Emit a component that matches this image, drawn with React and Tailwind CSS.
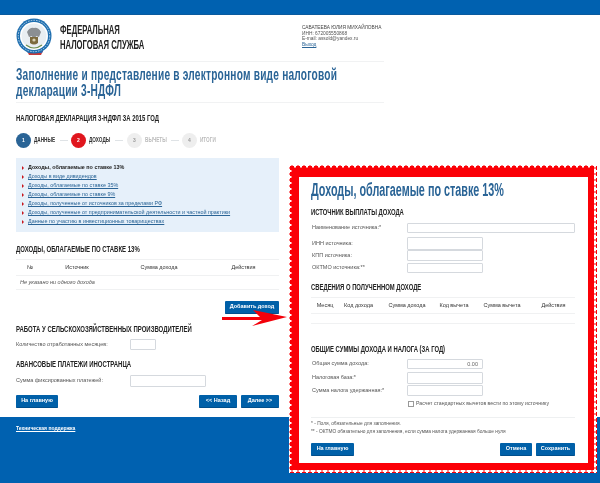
const narrow = "font-['Liberation_Sans',sans-serif] font-bold whitespace-nowrap origin-left";
const btn = "flex items-center justify-center bg-[#0060a8] text-white font-bold text-[5.5px] leading-none rounded-[1px] border-b border-[#004f8c]";
const input = "border border-[#d5d9de] rounded-[1px] bg-white shrink-0";

function Logo() {
  return (
    <svg width="38" height="38" viewBox="0 0 38 38" className="shrink-0 mt-[3px]">
      <path d="M11 33 h16 l-2 4 h-12 z" fill="#c43a3a" />
      <path d="M11 33 h16 l-1 2 h-14 z" fill="#3a5fa8" />
      <circle cx="18" cy="18" r="17.5" fill="#1f6fb0" />
      <circle cx="18" cy="18" r="14" fill="#ffffff" />
      <circle cx="18" cy="18" r="15.7" fill="none" stroke="#bcd6ea" strokeWidth="1" strokeDasharray="1.5 1.2" />
      <circle cx="18" cy="18" r="12.5" fill="#e9eef2" />
      <path d="M11 14 q3 -5 7 -4 q4 -1 7 4 l-2 5 l-3 -1 l-1 6 h-2 l-1 -6 l-3 1 z" fill="#8b8f93" />
      <path d="M14 19 h8 v6 q-4 3 -8 0 z" fill="#7c6a3e" />
      <circle cx="18" cy="22" r="1.6" fill="#d9d2b6" />
      <path d="M10 27 q8 6 16 0" fill="none" stroke="#6f8e4e" strokeWidth="1.2" />
    </svg>
  );
}

function Step({ n, label, color, text, arrow, gap }) {
  return (
    <>
      <div className={`w-[15px] h-[15px] rounded-full flex items-center justify-center text-[5px] font-bold shrink-0 ${color}`}>{n}</div>
      <span className={`${narrow} block ml-[3px] w-[26px] scale-x-[0.72] text-[6.5px] leading-none ${text}`}>{label}</span>
      {arrow && <span className={`w-[8px] h-[1px] bg-[#dfe3e6] shrink-0 ${gap}`} />}
    </>
  );
}

function Scallop({ children }) {
  return (
    <div className="absolute left-[289px] top-[165px] p-[3px] bg-white bg-[radial-gradient(circle,#fb0007_2.3px,transparent_2.8px)] bg-[length:6px_6px]">
      <div className="bg-[#fb0007]">
        {children}
      </div>
    </div>
  );
}

const links = [
  "Доходы в виде дивидендов",
  "Доходы, облагаемые по ставке 35%",
  "Доходы, облагаемые по ставке 9%",
  "Доходы, полученные от источников за пределами РФ",
  "Доходы, полученные от предпринимательской деятельности и частной практики",
  "Данные по участию в инвестиционных товариществах",
];

function Modal() {
  const Row = ({ label, w, h, mb, grey, value }) => (
    <div className={`flex items-center ${mb}`}>
      <span className="w-[96px] pl-[1px] text-[5.5px] text-[#555] leading-none shrink-0">{label}</span>
      <div className={`${input} ${w} ${h} ${grey ? "bg-[#e9e9e9]" : ""} flex items-center justify-end pr-[4px] text-[5.5px] text-[#666]`}>{value}</div>
    </div>
  );
  const head = `${narrow} text-[#222] text-[9.5px] leading-[12px] scale-x-[0.62]`;
  return (
    <Scallop>
      <div className="ml-[7px] mr-[6px] pt-[9px] pb-[7px]">
        <div className="w-[289px] h-[286px] bg-white px-[12px] text-[#333] flex flex-col">
          <div className={`${narrow} mt-[3px] text-[#2a6496] text-[18px] leading-[20px] scale-x-[0.6]`}>Доходы, облагаемые по ставке 13%</div>
          <div className={`${head} mt-[6px]`}>ИСТОЧНИК ВЫПЛАТЫ ДОХОДА</div>
          <div className="mt-[5px] flex flex-col">
            <Row label="Наименование источника:*" w="w-[168px]" h="h-[10px]" mb="mb-[4px]" />
            <Row label="ИНН источника:" w="w-[76px]" h="h-[13px]" />
            <Row label="КПП источника:" w="w-[76px]" h="h-[11px]" mb="mb-[2px]" />
            <Row label="ОКТМО источника:**" w="w-[76px]" h="h-[10px]" />
          </div>
          <div className={`${head} mt-[8px]`}>СВЕДЕНИЯ О ПОЛУЧЕННОМ ДОХОДЕ</div>
          <div className="mt-[4px] w-[264px] border-y border-[#f0f1f2]">
            <div className="grid grid-cols-[28px_39px_58px_36px_60px_43px] h-[16px] items-center text-center text-[5.5px] text-[#333] border-b border-[#f0f1f2] whitespace-nowrap">
              <span>Месяц</span><span>Код дохода</span><span>Сумма дохода</span><span>Код вычета</span><span>Сумма вычета</span><span>Действия</span>
            </div>
            <div className="h-[9px]" />
          </div>
          <div className={`${head} mt-[19px]`}>ОБЩИЕ СУММЫ ДОХОДА И НАЛОГА (ЗА ГОД)</div>
          <div className="mt-[4px] flex flex-col">
            <Row label="Общая сумма дохода:" w="w-[76px]" h="h-[10px]" mb="mb-[3px]" grey value="0.00" />
            <Row label="Налоговая база:*" w="w-[76px]" h="h-[12px]" mb="mb-[1px]" />
            <Row label="Сумма налога удержанная:*" w="w-[76px]" h="h-[11px]" />
          </div>
          <div className="mt-[5px] ml-[97px] flex items-center gap-[2px]">
            <div className="w-[6px] h-[6px] border border-[#999] bg-white" />
            <span className="text-[5.2px] leading-none text-[#555] whitespace-nowrap">Расчет стандартных вычетов вести по этому источнику</span>
          </div>
          <div className="mt-[10px] w-[264px] border-t border-[#eef0f1] pt-[2px] text-[4.8px] leading-[8px] text-[#555] whitespace-nowrap">
            <div>* - Поля, обязательные для заполнения.</div>
            <div>** - ОКТМО обязательно для заполнения, если сумма налога удержанная больше нуля</div>
          </div>
          <div className="mt-[7px] w-[264px] flex">
            <div className={`${btn} w-[43px] h-[13px]`}>На главную</div>
            <div className="flex-1" />
            <div className={`${btn} w-[32px] h-[13px]`}>Отмена</div>
            <div className={`${btn} w-[39px] h-[13px] ml-[4px]`}>Сохранить</div>
          </div>
        </div>
      </div>
    </Scallop>
  );
}

export default function App() {
  const head = `${narrow} text-[#222] text-[9.5px] leading-[12px] scale-x-[0.63]`;
  return (
    <div className="relative w-[600px] h-[483px] overflow-hidden bg-white font-['Liberation_Sans',sans-serif] flex flex-col blur-[0.3px]">
      <div className="h-[15px] bg-[#0061b0] border-b border-[#0a5a9e] shrink-0" />
      <div className="ml-[16px] w-[368px] h-[47px] border-b border-[#f1f2f3] flex items-start shrink-0">
        <Logo />
        <div className={`${narrow} ml-[6px] mt-[8px] text-[#222] text-[12px] leading-[15px] w-[242px] scale-x-[0.64]`}>
          <div>ФЕДЕРАЛЬНАЯ</div>
          <div>НАЛОГОВАЯ СЛУЖБА</div>
        </div>
        <div className="mt-[10px] text-[4.8px] leading-[5.5px] text-[#555] whitespace-nowrap">
          <div className="text-[#444]">САВАТЕЕВА ЮЛИЯ МИХАЙЛОВНА</div>
          <div>ИНН: 672005550868</div>
          <div>E-mail: assold@yandex.ru</div>
          <div className="underline text-[#2a6496]">Выход</div>
        </div>
      </div>
      <div className="ml-[16px] w-[368px] h-[41px] border-b border-[#f1f2f3] pt-[5px] shrink-0">
        <div className={`${narrow} text-[#2a6496] text-[16px] leading-[16px] tracking-[0.35px] scale-x-[0.633]`}>
          <div>Заполнение и представление в электронном виде налоговой</div>
          <div>декларации 3-НДФЛ</div>
        </div>
      </div>
      <div className="ml-[16px] w-[263px] shrink-0 flex flex-col">
        <div className={`${narrow} mt-[9px] text-[#222] text-[9px] leading-[12px] scale-x-[0.66]`}>НАЛОГОВАЯ ДЕКЛАРАЦИЯ 3-НДФЛ ЗА 2015 ГОД</div>
        <div className="mt-[9px] flex items-center h-[15px]">
          <Step n="1" label="ДАННЫЕ" color="bg-[#2a6496] text-white" text="text-[#333]" arrow gap="mr-[3px]" />
          <Step n="2" label="ДОХОДЫ" color="bg-[#e0161e] text-white" text="text-[#333]" arrow gap="mr-[4px]" />
          <Step n="3" label="ВЫЧЕТЫ" color="bg-[#eeeeee] text-[#999]" text="text-[#bbb]" arrow gap="mr-[3px]" />
          <Step n="4" label="ИТОГИ" color="bg-[#eeeeee] text-[#999]" text="text-[#bbb]" />
        </div>
        <div className="mt-[10px] h-[74px] bg-[#e6f0fa] pl-[6px] pt-[5px] text-[5.4px] leading-[9px] whitespace-nowrap">
          <div className="flex items-center text-[#222] font-bold">
            <span className="w-0 h-0 mr-[4px] border-y-[2px] border-y-transparent border-l-[2.5px] border-l-[#c8161d]" />
            Доходы, облагаемые по ставке 13%
          </div>
          {links.map((t) => (
            <div key={t} className="flex items-center text-[#2a6496]">
              <span className="w-0 h-0 mr-[4px] border-y-[2px] border-y-transparent border-l-[2.5px] border-l-[#c8161d]" />
              <span className="underline">{t}</span>
            </div>
          ))}
        </div>
        <div className={`${head} mt-[11px]`}>ДОХОДЫ, ОБЛАГАЕМЫЕ ПО СТАВКЕ 13%</div>
        <div className="mt-[4px] w-[263px] border-b border-t border-[#f0f1f2]">
          <div className="grid grid-cols-[28px_66px_98px_71px] h-[16px] items-center text-center text-[5.5px] text-[#333] border-b border-[#f0f1f2]">
            <span>№</span><span>Источник</span><span>Сумма дохода</span><span>Действия</span>
          </div>
          <div className="h-[13px] pl-[4px] flex items-center text-[5.5px] italic text-[#555]">Не указано ни одного дохода</div>
        </div>
        <div className="mt-[11px] flex justify-end">
          <div className={`${btn} w-[54px] h-[13px]`}>Добавить доход</div>
        </div>
        <div className={`${head} mt-[9px]`}>РАБОТА У СЕЛЬСКОХОЗЯЙСТВЕННЫХ ПРОИЗВОДИТЕЛЕЙ</div>
        <div className="mt-[4px] flex items-center">
          <span className="w-[114px] text-[5.5px] text-[#555] leading-none">Количество отработанных месяцев:</span>
          <div className={`${input} w-[26px] h-[11px]`} />
        </div>
        <div className={`${head} mt-[8px]`}>АВАНСОВЫЕ ПЛАТЕЖИ ИНОСТРАНЦА</div>
        <div className="mt-[5px] flex items-center">
          <span className="w-[114px] text-[5.5px] text-[#555] leading-none">Сумма фиксированных платежей:</span>
          <div className={`${input} w-[76px] h-[12px]`} />
        </div>
        <div className="mt-[8px] flex">
          <div className={`${btn} w-[42px] h-[13px]`}>На главную</div>
          <div className="flex-1" />
          <div className={`${btn} w-[38px] h-[13px]`}>&lt;&lt; Назад</div>
          <div className={`${btn} w-[38px] h-[13px] ml-[4px]`}>Далее &gt;&gt;</div>
        </div>
      </div>
      <div className="mt-[9px] flex-1 bg-[#0061b0] pl-[16px] pt-[9px]">
        <span className="text-white text-[5px] leading-none font-bold underline block">Техническая поддержка</span>
      </div>
      <Modal />
      <svg className="absolute left-[222px] top-[309px]" width="68" height="19" viewBox="0 0 68 19">
        <path d="M0 8 H38 L31 1 L65 8 L30 17 L40 11 H0 Z" fill="#f3000a" />
      </svg>
    </div>
  );
}
